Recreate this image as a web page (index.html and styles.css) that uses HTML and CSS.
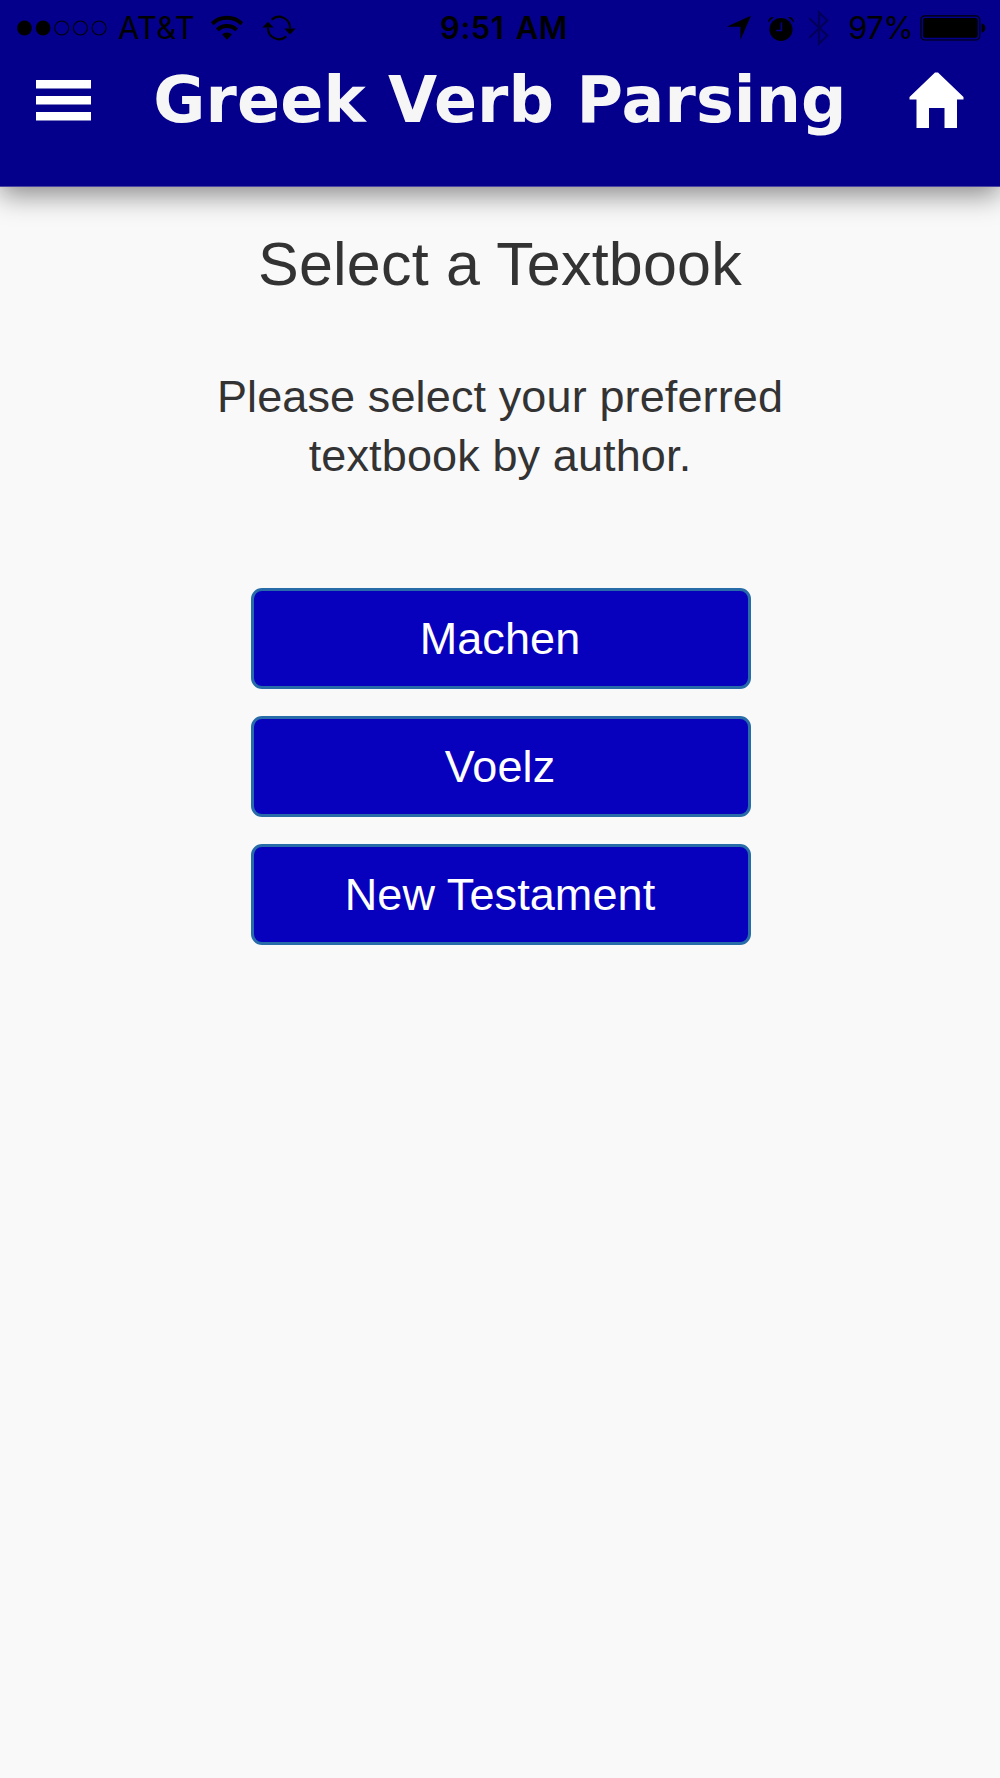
FILE: index.html
```html
<!DOCTYPE html>
<html lang="en">
<head>
    <meta charset="UTF-8">
    <meta name="viewport" content="width=device-width, initial-scale=1.0">
    <title>Greek Verb Parsing</title>
    <link rel="stylesheet" href="styles.css">
</head>
<body>
    <header class="header">
        <div class="status-bar">
            <div class="status-left">
                <svg class="signal" width="92" height="18" viewBox="0 0 92 18">
                    <circle cx="8.5" cy="9" r="7.4"/>
                    <circle cx="27.1" cy="9" r="7.4"/>
                    <g fill="none" stroke="#000" stroke-width="1.1">
                        <circle cx="45.7" cy="9" r="7"/>
                        <circle cx="64.4" cy="9" r="7"/>
                        <circle cx="83.1" cy="9" r="7"/>
                    </g>
                </svg>
                <span class="carrier">AT&amp;T</span>
                <svg class="wifi" width="34" height="26" viewBox="0 0 34 26">
                    <g fill="none" stroke="#000" stroke-width="4">
                        <path d="M2.2 8.7a21.5 21.5 0 0 1 29.6 0"/>
                        <path d="M7.3 14.9a14 14 0 0 1 19.4 0"/>
                    </g>
                    <path d="M12 19.6a7.2 7.2 0 0 1 10 0L17 24.8z"/>
                </svg>
                <svg class="sync" width="34" height="26" viewBox="0 0 34 26">
                    <g fill="none" stroke="#000" stroke-width="2.1">
                        <path d="M9.7 4.6A11 11 0 0 1 28 13.2"/>
                        <path d="M24.3 21.4A11 11 0 0 1 6 12.8"/>
                    </g>
                    <path d="M22.3 13.5h11.4l-5.7 6zM.3 12.5h11.4L6 6.7z"/>
                </svg>
            </div>
            <div class="time">9:51 AM</div>
            <div class="status-right">
                <svg class="location" width="26" height="26" viewBox="0 0 26 26">
                    <path d="M25 .8L14.4 25V11.7H.6z"/>
                </svg>
                <svg class="alarm" width="28" height="27" viewBox="0 0 28 27">
                    <circle cx="14" cy="14.4" r="11.5"/>
                    <path d="M1.2 7.6C.9 3.8 3.5 1.4 6.9 2zM26.8 7.6C27.1 3.8 24.5 1.4 21.1 2z"/>
                    <path d="M14.4 7.5v8H9.2" fill="none" stroke="#04008b" stroke-width="1.6"/>
                </svg>
                <svg class="bluetooth" width="22" height="36" viewBox="0 0 22 36">
                    <path d="M1.3 8.3L19.4 25.6 11 33.6V2.4l8.4 8L1.3 27.7" fill="none" stroke="#03005a" stroke-width="2.2"/>
                </svg>
                <span class="percent">97%</span>
                <svg class="battery" width="66" height="26" viewBox="0 0 66 26">
                    <rect x=".8" y=".8" width="59" height="24.2" rx="4" fill="none" stroke="#000" stroke-width="1.2"/>
                    <rect x="3" y="3" width="54.6" height="19.8" rx="2"/>
                    <path d="M61.6 8.4c5 .8 5 8.4 0 9.2z"/>
                </svg>
            </div>
        </div>
        <div class="title-bar">
            <svg class="menu-icon" width="55" height="43" viewBox="0 0 55 43">
                <path d="M0 1h55v8.5H0zM0 17h55v8.5H0zM0 33h55v8.5H0z"/>
            </svg>
            <h1>Greek Verb Parsing</h1>
            <svg class="home-icon" width="56" height="58" viewBox="0 0 56 58">
                <path d="M26 1.500h3L54.500 26v2.500H48V57H35.500V37H20v20H7.500V28.500H.5V26z"/>
            </svg>
        </div>
    </header>
    <main>
        <h2>Select a Textbook</h2>
        <p class="intro">Please select your preferred<br>textbook by author.</p>
        <div class="buttons">
            <button class="btn">Machen</button>
            <button class="btn">Voelz</button>
            <button class="btn">New Testament</button>
        </div>
    </main>
</body>
</html>
```
FILE: styles.css
```css
body, html {
    margin: 0;
    padding: 0;
    height: 100%;
    background-color: #f9f9f9;
    color: #333;
    font-family: "Liberation Sans", Arial, sans-serif;
}

svg {
    display: block;
    flex: none;
}

.header {
    box-sizing: border-box;
    height: 187px;
    background-color: #04008b;
    border-bottom: 1px solid #4a459f;
    box-shadow: 0 8px 26px rgba(0, 0, 0, 0.45);
}

/* Phone status row */
.status-bar {
    display: grid;
    grid-template-columns: 1fr auto 1fr;
    align-items: center;
    height: 54px;
    padding: 0 14px 0 16px;
    color: #000;
    font-family: Inter, sans-serif;
    font-size: 31px;
    line-height: 56px;
}

.status-left, .status-right {
    display: flex;
    align-items: center;
}

.status-right {
    justify-content: flex-end;
}

.carrier {
    width: 78px;
    margin-left: 10px;
    letter-spacing: 0.3px;
}

.wifi {
    margin-left: 14px;
}

.sync {
    margin-left: 18px;
}

.time {
    padding-left: 6px;
    font-weight: 600;
    letter-spacing: 0.5px;
    word-spacing: 3px;
}

.alarm {
    margin-left: 15px;
}

.bluetooth {
    margin-left: 13px;
}

.percent {
    margin: 0 7px 0 18px;
    letter-spacing: -0.6px;
}

/* Title row */
.title-bar {
    display: flex;
    justify-content: space-between;
    align-items: center;
    height: 92px;
    padding: 0 35px 0 36px;
}

.menu-icon, .home-icon {
    fill: #fff;
}

.title-bar h1 {
    margin: 0;
    color: #f6f6f6;
    font-family: Verdana, "DejaVu Sans", sans-serif;
    font-size: 63.5px;
    font-weight: bold;
    line-height: 94px;
    letter-spacing: 0.15px;
    white-space: nowrap;
}

main {
    text-align: center;
}

h2 {
    margin: 41px 0 0;
    font-size: 61px;
    font-weight: normal;
    line-height: 72px;
    letter-spacing: 0.2px;
}

.intro {
    margin: 67px 0 0;
    font-size: 45px;
    line-height: 59px;
    letter-spacing: 0.12px;
}

.buttons {
    display: flex;
    flex-direction: column;
    align-items: center;
    gap: 27px;
    margin-top: 103px;
    padding-left: 1px;
}

.btn {
    box-sizing: border-box;
    width: 500px;
    height: 101px;
    padding: 1px 1px 0 0;
    border: 3px solid #276ca8;
    border-radius: 11px;
    background-color: #0700bd;
    color: #fff;
    font-family: inherit;
    font-size: 45px;
    letter-spacing: 0.1px;
}
```
